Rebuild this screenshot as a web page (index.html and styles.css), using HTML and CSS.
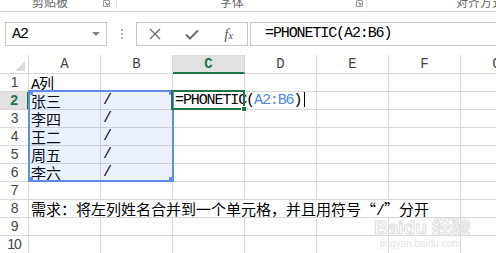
FILE: index.html
```html
<!DOCTYPE html>
<html lang="zh-CN">
<head>
  <meta charset="UTF-8">
  <title>PHONETIC</title>
  <link rel="stylesheet" href="styles.css">
</head>
<body>

  <div class="ribbon">
    <div class="group g1">
      <span class="group-label">剪贴板</span>
      <svg class="launcher" width="7" height="7" viewBox="0 0 7 7"><path d="M0.5 0.5h6v6h-6z" fill="none" stroke="#a0a0a0"/><path d="M2 2l3 3M5 3v2H3" fill="none" stroke="#808080"/></svg>
    </div>
    <div class="group g2">
      <span class="group-label">字体</span>
      <svg class="launcher" width="7" height="7" viewBox="0 0 7 7"><path d="M0.5 0.5h6v6h-6z" fill="none" stroke="#a0a0a0"/><path d="M2 2l3 3M5 3v2H3" fill="none" stroke="#808080"/></svg>
    </div>
    <div class="group g3">
      <span class="group-label">对齐方式</span>
    </div>
  </div>

  <div class="formula-row">
    <div class="name-box">
      <span>A2</span>
      <span class="drop"></span>
    </div>
    <div class="grip"><i></i><i></i><i></i></div>
    <div class="fx-buttons">
      <svg width="12" height="12" viewBox="0 0 12 12"><path d="M1 1l10 10M11 1L1 11" stroke="#6e6e6e" stroke-width="1.4"/></svg>
      <svg width="14" height="11" viewBox="0 0 14 11"><path d="M1 5.5l4 4L13 1.5" fill="none" stroke="#6e6e6e" stroke-width="2"/></svg>
      <span class="fx">f<small>x</small></span>
    </div>
    <div class="formula-input">=PHONETIC(A2:B6)</div>
  </div>

  <div class="sheet">
    <div class="grid">
      <div class="c corner"></div>
      <div class="c col-h">A</div>
      <div class="c col-h">B</div>
      <div class="c col-h on">C</div>
      <div class="c col-h">D</div>
      <div class="c col-h">E</div>
      <div class="c col-h">F</div>
      <div class="c col-h">G</div>

      <div class="c row-h">1</div>
      <div class="c">A<span class="zh">列</span></div>
      <div class="c"></div><div class="c"></div><div class="c"></div><div class="c"></div><div class="c"></div><div class="c"></div>

      <div class="c row-h on">2</div>
      <div class="c"><span class="zh">张三</span></div>
      <div class="c">/</div>
      <div class="c">=PHONETIC(<span class="ref">A2:B6</span>)<span class="caret"></span></div>
      <div class="c"></div><div class="c"></div><div class="c"></div><div class="c"></div>

      <div class="c row-h">3</div>
      <div class="c"><span class="zh">李四</span></div>
      <div class="c">/</div>
      <div class="c"></div><div class="c"></div><div class="c"></div><div class="c"></div><div class="c"></div>

      <div class="c row-h">4</div>
      <div class="c"><span class="zh">王二</span></div>
      <div class="c">/</div>
      <div class="c"></div><div class="c"></div><div class="c"></div><div class="c"></div><div class="c"></div>

      <div class="c row-h">5</div>
      <div class="c"><span class="zh">周五</span></div>
      <div class="c">/</div>
      <div class="c"></div><div class="c"></div><div class="c"></div><div class="c"></div><div class="c"></div>

      <div class="c row-h">6</div>
      <div class="c"><span class="zh">李六</span></div>
      <div class="c">/</div>
      <div class="c"></div><div class="c"></div><div class="c"></div><div class="c"></div><div class="c"></div>

      <div class="c row-h">7</div>
      <div class="c"></div><div class="c"></div><div class="c"></div><div class="c"></div><div class="c"></div><div class="c"></div><div class="c"></div>

      <div class="c row-h">8</div>
      <div class="c wide"><span class="zh">需求：将左列姓名合并到一个单元格，并且用符号“</span>/<span class="zh">”分开</span></div>
      <div class="c"></div>

      <div class="c row-h">9</div>
      <div class="c"></div><div class="c"></div><div class="c"></div><div class="c"></div><div class="c"></div><div class="c"></div><div class="c"></div>

      <div class="c row-h">10</div>
      <div class="c"></div><div class="c"></div><div class="c"></div><div class="c"></div><div class="c"></div><div class="c"></div><div class="c"></div>
    </div>

    <!-- range highlight for A2:B6 and the active cell -->
    <div class="ref-box">
      <span class="knob tl"></span><span class="knob tr"></span>
      <span class="knob bl"></span><span class="knob br"></span>
    </div>
    <div class="active-cell"><span class="fill-handle"></span></div>

    <div class="watermark">
      <div class="wm-logo">Bai<b>du</b> 经验</div>
      <div class="wm-url">jingyan.baidu.com</div>
    </div>
  </div>

</body>
</html>
```

FILE: styles.css
```css
* {
  box-sizing: border-box;
}

body {
  margin: 0;
  width: 496px;
  height: 253px;
  overflow: hidden;
  background-color: #fff;
  font-family: "Liberation Mono", "Noto Sans CJK SC", monospace;
  color: #000;
}

/* ribbon group labels, cut off at the top */
.ribbon {
  display: flex;
  height: 12px;
  border-bottom: 1px solid #d5d5d5;
  overflow: hidden;
}

.group {
  display: flex;
  flex: none;
  height: 9px;
  border-right: 1px solid #e1e1e1;
}

.g1 {
  width: 117px;
  padding-left: 32px;
}

.g2 {
  width: 250px;
  padding-left: 103px;
}

.g3 {
  flex: 1;
  padding-left: 89px;
  border-right: none;
}

.group-label {
  font: 12px/12px "Noto Sans CJK SC", sans-serif;
  color: #666;
  margin-top: -4px;
  white-space: nowrap;
}

.launcher {
  margin-left: auto;
  margin-right: 6px;
}

.g2 .launcher {
  margin-right: 3px;
}

/* name box + formula bar */
.formula-row {
  display: flex;
  align-items: flex-start;
  height: 43px;
  padding-top: 10px;
}

.formula-row > * {
  flex: none;
}

.name-box {
  margin-left: 5px;
  width: 102px;
  height: 24px;
  border: 1px solid #c6c6c6;
  display: flex;
  align-items: center;
  padding: 0 6px;
  font-size: 15px;
  letter-spacing: -1.1px;
}

.drop {
  margin-left: auto;
  border-left: 4px solid transparent;
  border-right: 4px solid transparent;
  border-top: 4px solid #808080;
}

.grip {
  margin-left: 14px;
  padding-top: 7px;
  display: flex;
  flex-direction: column;
  gap: 2px;
}

.grip i {
  display: block;
  width: 2px;
  height: 2px;
  background-color: #b4b4b4;
}

.fx-buttons {
  margin-left: 13px;
  width: 112px;
  height: 24px;
  border: 1px solid #c6c6c6;
  display: grid;
  grid-template-columns: repeat(3, 1fr);
  align-items: center;
  justify-items: center;
}

.fx {
  font: italic 15px/1 "Liberation Serif", serif;
  color: #555;
}

.fx small {
  font-size: 11px;
}

.formula-input {
  margin-left: 2px;
  width: 260px;
  height: 24px;
  border: 1px solid #c6c6c6;
  padding-left: 14px;
  font-size: 15px;
  line-height: 22px;
  letter-spacing: -1.1px;
  white-space: nowrap;
}

/* worksheet */
.sheet {
  position: relative;
  height: 198px;
  overflow: hidden;
}

.grid {
  display: grid;
  grid-template-columns: 29px repeat(7, 72px);
  grid-template-rows: 19px;
  grid-auto-rows: 18px;
}

.c {
  border-right: 1px solid #d9d9d9;
  border-bottom: 1px solid #d9d9d9;
  padding-left: 2px;
  font-size: 15px;
  line-height: 17px;
  letter-spacing: -1.1px;
  white-space: nowrap;
}

.zh {
  font-family: "Noto Sans CJK SC", sans-serif;
  letter-spacing: 0;
}

.wide {
  grid-column: span 6;
}

.corner {
  position: relative;
}

.corner::after {
  content: "";
  position: absolute;
  right: 3px;
  bottom: 2px;
  border-left: 10px solid transparent;
  border-bottom: 10px solid #dcdcdc;
}

.col-h {
  padding: 1px 0 0;
  text-align: center;
  font-size: 14px;
  letter-spacing: 0;
  color: #444;
}

.row-h {
  padding: 0;
  text-align: center;
  font: 14px/17px "Liberation Sans", sans-serif;
  color: #444;
}

.col-h.on {
  background-color: #e1e1e1;
  color: #217346;
  font-weight: bold;
  border-bottom: 2px solid #217346;
}

.row-h.on {
  background-color: #e1e1e1;
  color: #217346;
  font-weight: bold;
  border-right: 2px solid #217346;
}

.ref {
  color: #4f86e8;
}

.caret {
  display: inline-block;
  width: 1px;
  height: 15px;
  margin-left: 3px;
  background-color: #000;
  vertical-align: -3px;
}

.ref-box {
  position: absolute;
  left: 28px;
  top: 35px;
  width: 146px;
  height: 92px;
  border: 2px solid #5e8fe8;
  background-color: rgba(91, 141, 239, 0.115);
}

.knob {
  position: absolute;
  width: 5px;
  height: 5px;
  background-color: #5e8fe8;
}

.tl { left: -2px; top: -2px; }
.tr { right: -2px; top: -2px; }
.bl { left: -2px; bottom: -2px; }
.br { right: -2px; bottom: -2px; }

.active-cell {
  position: absolute;
  left: 171px;
  top: 35px;
  width: 74px;
  height: 20px;
  border: 2px solid #217346;
}

.fill-handle {
  position: absolute;
  right: -4px;
  bottom: -4px;
  width: 6px;
  height: 6px;
  background-color: #217346;
  border: 1px solid #fff;
}

.watermark {
  position: absolute;
  left: 374px;
  top: 163px;
  color: rgba(255, 255, 255, 0.7);
  -webkit-text-stroke: 1px #dedede;
  font-family: "Liberation Sans", "Noto Sans CJK SC", sans-serif;
}

.wm-logo {
  font-size: 19px;
  font-weight: bold;
  line-height: 20px;
}

.wm-url {
  font-size: 10px;
  line-height: 12px;
  margin-left: 6px;
  -webkit-text-stroke: 0;
  color: #e4e4e4;
}
```
